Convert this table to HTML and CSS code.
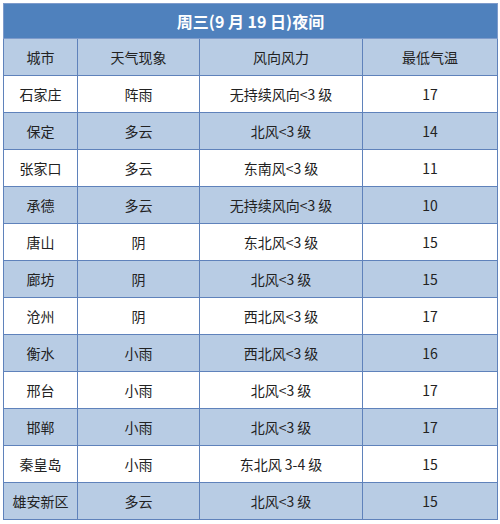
FILE: index.html
```html
<!DOCTYPE html>
<html lang="zh">
<head>
<meta charset="utf-8">
<link rel="stylesheet" href="styles.css">
</head>
<body>
<table class="weather">
  <colgroup>
    <col class="c1"><col class="c2"><col class="c3"><col class="c4">
  </colgroup>
  <tr class="title"><td colspan="4">周三(9 月 19 日)夜间</td></tr>
  <tr class="alt"><td>城市</td><td>天气现象</td><td>风向风力</td><td>最低气温</td></tr>
  <tr><td>石家庄</td><td>阵雨</td><td>无持续风向&lt;3 级</td><td>17</td></tr>
  <tr class="alt"><td>保定</td><td>多云</td><td>北风&lt;3 级</td><td>14</td></tr>
  <tr><td>张家口</td><td>多云</td><td>东南风&lt;3 级</td><td>11</td></tr>
  <tr class="alt"><td>承德</td><td>多云</td><td>无持续风向&lt;3 级</td><td>10</td></tr>
  <tr><td>唐山</td><td>阴</td><td>东北风&lt;3 级</td><td>15</td></tr>
  <tr class="alt"><td>廊坊</td><td>阴</td><td>北风&lt;3 级</td><td>15</td></tr>
  <tr><td>沧州</td><td>阴</td><td>西北风&lt;3 级</td><td>17</td></tr>
  <tr class="alt"><td>衡水</td><td>小雨</td><td>西北风&lt;3 级</td><td>16</td></tr>
  <tr><td>邢台</td><td>小雨</td><td>北风&lt;3 级</td><td>17</td></tr>
  <tr class="alt"><td>邯郸</td><td>小雨</td><td>北风&lt;3 级</td><td>17</td></tr>
  <tr><td>秦皇岛</td><td>小雨</td><td>东北风 3-4 级</td><td>15</td></tr>
  <tr class="alt"><td>雄安新区</td><td>多云</td><td>北风&lt;3 级</td><td>15</td></tr>
</table>
</body>
</html>
```

FILE: styles.css
```css
html, body {
  margin: 0;
  background: #ffffff;
}
body {
  padding: 3px;
}
.weather {
  width: 494px;
  border-collapse: collapse;
  table-layout: fixed;
  font-family: "Noto Sans CJK SC", "Noto Sans", sans-serif;
  font-size: 14px;
  color: #222222;
  border: 1px solid #7e9bcb;
}
.c1 { width: 74px; }
.c2 { width: 122px; }
.c3 { width: 163px; }
.c4 { width: 135px; }
.weather td {
  border: 1px solid #5f82bb;
  text-align: center;
  vertical-align: middle;
  height: 36px;
  padding: 0;
  line-height: 1;
  white-space: nowrap;
}
.weather tr.title td {
  background: #4f81bd;
  color: #ffffff;
  font-weight: bold;
  font-size: 16px;
  height: 34px;
  border-color: #7e9bcb;
}
.weather tr.alt td {
  background: #b8cce4;
}
```
